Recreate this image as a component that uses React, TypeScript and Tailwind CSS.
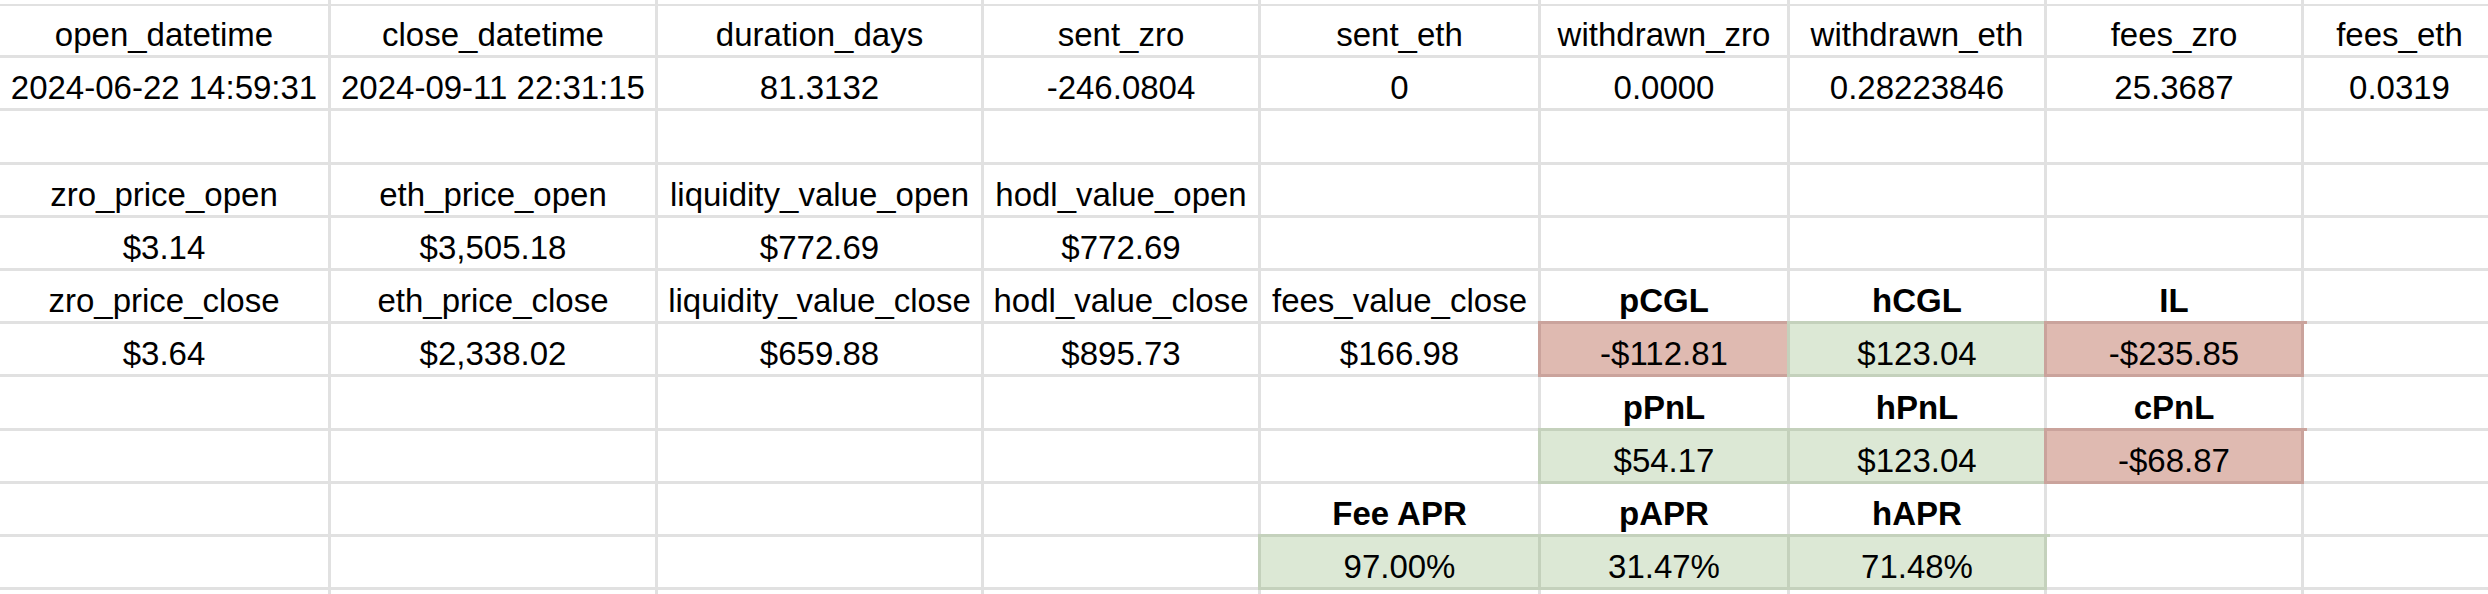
import React from "react";

type Fill = "none" | "red" | "green";
type Cell = { t?: string; b?: boolean; f?: Fill };

const widths = [
  "w-[331px]",
  "w-[327px]",
  "w-[326px]",
  "w-[277px]",
  "w-[280px]",
  "w-[249px]",
  "w-[257px]",
  "w-[257px]",
  "w-[194px]",
];

const rowHeights = [
  "h-[52px]",
  "h-[53px]",
  "h-[54px]",
  "h-[53px]",
  "h-[53px]",
  "h-[53px]",
  "h-[53px]",
  "h-[54px]",
  "h-[53px]",
  "h-[53px]",
  "h-[53px]",
];

const E: Cell = {};
const n = (t: string): Cell => ({ t });
const b = (t: string): Cell => ({ t, b: true });
const r = (t: string): Cell => ({ t, f: "red" });
const g = (t: string): Cell => ({ t, f: "green" });

const rows: Cell[][] = [
  [
    n("open_datetime"),
    n("close_datetime"),
    n("duration_days"),
    n("sent_zro"),
    n("sent_eth"),
    n("withdrawn_zro"),
    n("withdrawn_eth"),
    n("fees_zro"),
    n("fees_eth"),
  ],
  [
    n("2024-06-22 14:59:31"),
    n("2024-09-11 22:31:15"),
    n("81.3132"),
    n("-246.0804"),
    n("0"),
    n("0.0000"),
    n("0.28223846"),
    n("25.3687"),
    n("0.0319"),
  ],
  [E, E, E, E, E, E, E, E, E],
  [
    n("zro_price_open"),
    n("eth_price_open"),
    n("liquidity_value_open"),
    n("hodl_value_open"),
    E,
    E,
    E,
    E,
    E,
  ],
  [n("$3.14"), n("$3,505.18"), n("$772.69"), n("$772.69"), E, E, E, E, E],
  [
    n("zro_price_close"),
    n("eth_price_close"),
    n("liquidity_value_close"),
    n("hodl_value_close"),
    n("fees_value_close"),
    b("pCGL"),
    b("hCGL"),
    b("IL"),
    E,
  ],
  [
    n("$3.64"),
    n("$2,338.02"),
    n("$659.88"),
    n("$895.73"),
    n("$166.98"),
    r("-$112.81"),
    g("$123.04"),
    r("-$235.85"),
    E,
  ],
  [E, E, E, E, E, b("pPnL"), b("hPnL"), b("cPnL"), E],
  [E, E, E, E, E, g("$54.17"), g("$123.04"), r("-$68.87"), E],
  [E, E, E, E, b("Fee APR"), b("pAPR"), b("hAPR"), E, E],
  [E, E, E, E, g("97.00%"), g("31.47%"), g("71.48%"), E, E],
];

function fillClass(f?: Fill) {
  if (f === "red")
    return "bg-[#dfbab1] border-[#caa39c] shadow-[0_0_0_3px_#caa39c]";
  if (f === "green")
    return "bg-[#dce8d5] border-[#c4d1bc] shadow-[0_0_0_3px_#c4d1bc]";
  return "bg-white border-[#e1e1e1]";
}

function GridCell({ cell, w, bottom }: { cell: Cell; w: string; bottom: boolean }) {
  return (
    <div
      className={`${w} shrink-0 border-r-[3px] ${bottom ? "border-b-[3px]" : ""} ${fillClass(
        cell.f
      )} flex items-end justify-center pb-[4px] overflow-hidden whitespace-nowrap`}
    >
      {cell.t ? (
        <span className={`text-[33px] leading-[33px] text-black ${cell.b ? "font-bold" : "font-normal"}`}>
          {cell.t}
        </span>
      ) : null}
    </div>
  );
}

export default function App() {
  return (
    <div className="w-[2488px] h-[594px] overflow-hidden bg-white font-['Liberation_Sans',Arial,sans-serif]">
      <div className="flex h-[6px]">
        {widths.map((w, i) => (
          <GridCell key={i} cell={E} w={w} bottom={true} />
        ))}
      </div>
      {rows.map((row, ri) => (
        <div key={ri} className={`flex ${rowHeights[ri]}`}>
          {row.map((c, ci) => (
            <GridCell key={ci} cell={c} w={widths[ci]} bottom={true} />
          ))}
        </div>
      ))}
      <div className="flex h-[4px]">
        {widths.map((w, i) => (
          <GridCell key={i} cell={E} w={w} bottom={false} />
        ))}
      </div>
    </div>
  );
}
